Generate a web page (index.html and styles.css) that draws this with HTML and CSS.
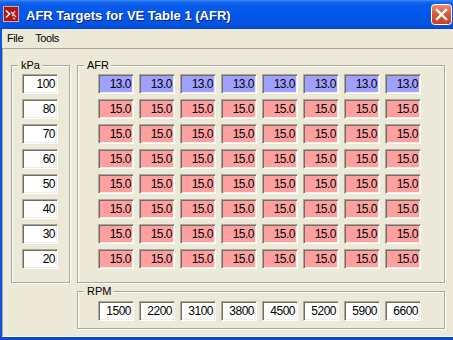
FILE: index.html
```html
<!DOCTYPE html>
<html>
<head>
<meta charset="utf-8">
<link rel="stylesheet" href="styles.css">
</head>
<body>
<div class="window">
  <div class="titlebar">
    <svg class="app-icon" width="16" height="16" viewBox="0 0 16 16">
      <rect x="0.5" y="0.5" width="15" height="15" fill="#9e0f0f" stroke="#e9a3a3"/>
      <rect x="1.5" y="1.5" width="13" height="13" fill="#b01818"/>
      <polyline points="3,4.5 6.5,8 3,11.5" fill="none" stroke="#fff" stroke-width="1.6"/>
      <path d="M8 6 L10 8 L12 5 M9 10 L11 9 L13 11 M10 12 L12 13" fill="none" stroke="#f6d8d8" stroke-width="1.2"/>
    </svg>
    <span class="title">AFR Targets for VE Table 1 (AFR)</span>
    <svg class="close" width="21" height="21" viewBox="0 0 21 21">
      <defs>
        <linearGradient id="cg" x1="0" y1="0" x2="0" y2="1">
          <stop offset="0" stop-color="#eb9273"/>
          <stop offset="0.45" stop-color="#dc5a38"/>
          <stop offset="1" stop-color="#c8401f"/>
        </linearGradient>
      </defs>
      <rect x="0.5" y="0.5" width="20" height="20" rx="3" fill="url(#cg)" stroke="#fff"/>
      <path d="M6 6 L15 15 M15 6 L6 15" stroke="#fff" stroke-width="2.4" stroke-linecap="square"/>
    </svg>
  </div>
  <div class="frame">
    <div class="menubar"><span>File</span><span>Tools</span></div>
    <div class="client">
      <div class="group kpa">
        <span class="legend">kPa</span>
        <div class="col">
          <div class="cell">100</div>
          <div class="cell">80</div>
          <div class="cell">70</div>
          <div class="cell">60</div>
          <div class="cell">50</div>
          <div class="cell">40</div>
          <div class="cell">30</div>
          <div class="cell">20</div>
        </div>
      </div>
      <div class="right">
        <div class="group afr">
          <span class="legend">AFR</span>
          <div class="grid">
            <div class="cell blue">13.0</div><div class="cell blue">13.0</div><div class="cell blue">13.0</div><div class="cell blue">13.0</div><div class="cell blue">13.0</div><div class="cell blue">13.0</div><div class="cell blue">13.0</div><div class="cell blue">13.0</div>
            <div class="cell red">15.0</div><div class="cell red">15.0</div><div class="cell red">15.0</div><div class="cell red">15.0</div><div class="cell red">15.0</div><div class="cell red">15.0</div><div class="cell red">15.0</div><div class="cell red">15.0</div>
            <div class="cell red">15.0</div><div class="cell red">15.0</div><div class="cell red">15.0</div><div class="cell red">15.0</div><div class="cell red">15.0</div><div class="cell red">15.0</div><div class="cell red">15.0</div><div class="cell red">15.0</div>
            <div class="cell red">15.0</div><div class="cell red">15.0</div><div class="cell red">15.0</div><div class="cell red">15.0</div><div class="cell red">15.0</div><div class="cell red">15.0</div><div class="cell red">15.0</div><div class="cell red">15.0</div>
            <div class="cell red">15.0</div><div class="cell red">15.0</div><div class="cell red">15.0</div><div class="cell red">15.0</div><div class="cell red">15.0</div><div class="cell red">15.0</div><div class="cell red">15.0</div><div class="cell red">15.0</div>
            <div class="cell red">15.0</div><div class="cell red">15.0</div><div class="cell red">15.0</div><div class="cell red">15.0</div><div class="cell red">15.0</div><div class="cell red">15.0</div><div class="cell red">15.0</div><div class="cell red">15.0</div>
            <div class="cell red">15.0</div><div class="cell red">15.0</div><div class="cell red">15.0</div><div class="cell red">15.0</div><div class="cell red">15.0</div><div class="cell red">15.0</div><div class="cell red">15.0</div><div class="cell red">15.0</div>
            <div class="cell red">15.0</div><div class="cell red">15.0</div><div class="cell red">15.0</div><div class="cell red">15.0</div><div class="cell red">15.0</div><div class="cell red">15.0</div><div class="cell red">15.0</div><div class="cell red">15.0</div>
          </div>
        </div>
        <div class="group rpm">
          <span class="legend">RPM</span>
          <div class="row">
            <div class="cell">1500</div>
            <div class="cell">2200</div>
            <div class="cell">3100</div>
            <div class="cell">3800</div>
            <div class="cell">4500</div>
            <div class="cell">5200</div>
            <div class="cell">5900</div>
            <div class="cell">6600</div>
          </div>
        </div>
      </div>
    </div>
  </div>
</div>
</body>
</html>
```
FILE: styles.css
```css
body {
  margin: 0;
  background: #ece9d8;
}

.window {
  width: 453px;
  height: 340px;
  overflow: hidden;
  display: flex;
  flex-direction: column;
  font-family: "Liberation Sans", Arial, sans-serif;
  color: #000;
}

.titlebar {
  height: 29px;
  flex: none;
  display: flex;
  align-items: flex-start;
  background: linear-gradient(to bottom, #3d8ffc 0px, #1467ee 2px, #0a5be9 5px, #0058ee 12px, #0455e3 22px, #0350dc 27px, #0a46c8 29px);
}

.app-icon {
  flex: none;
  margin: 6px 0 0 3px;
}

.title {
  margin: 2px 0 0 7px;
  line-height: 27px;
  font-size: 13px;
  font-weight: bold;
  color: #fff;
  text-shadow: 1px 1px 0 #0a1d8a;
  white-space: nowrap;
}

.close {
  flex: none;
  margin: 4px 1px 0 auto;
}

.frame {
  flex: 1;
  min-height: 0;
  display: flex;
  flex-direction: column;
  border-left: 2px solid #0a55e0;
  border-bottom: 3px solid #0a4bd4;
  background: #ece9d8;
}

.menubar {
  height: 19px;
  flex: none;
  display: flex;
  gap: 12px;
  padding-left: 5px;
  font-size: 11px;
  line-height: 18px;
  letter-spacing: -0.4px;
}

.client {
  flex: 1;
  min-height: 0;
  display: flex;
  align-items: flex-start;
  padding: 16px 0 0 8px;
  border-top: 1px solid #aca899;
  border-left: 1px solid #aca899;
  border-bottom: 1px solid #fff;
}

.group {
  position: relative;
  box-sizing: border-box;
  border: 1px solid #aca899;
  box-shadow: 1px 1px 0 #fff, inset 1px 1px 0 #fff;
}

.legend {
  position: absolute;
  top: -7px;
  left: 6px;
  padding: 0 2px 0 3px;
  background: #ece9d8;
  font-size: 11px;
  line-height: 13px;
  white-space: nowrap;
}

.kpa {
  width: 59px;
  height: 218px;
  padding: 8px 0 0 10px;
}

.col {
  display: flex;
  flex-direction: column;
  gap: 5px;
}

.right {
  margin-left: 7px;
  display: flex;
  flex-direction: column;
  gap: 8px;
}

.afr {
  width: 368px;
  height: 218px;
  padding: 8px 0 0 20px;
}

.grid {
  display: grid;
  grid-template-columns: repeat(8, 36px);
  gap: 5px;
}

.rpm {
  width: 368px;
  height: 38px;
  padding: 9px 0 0 20px;
}

.row {
  display: flex;
  gap: 5px;
}

.cell {
  width: 36px;
  height: 20px;
  box-sizing: border-box;
  border: 1px solid;
  border-color: #aca899 #fff #fff #aca899;
  box-shadow: inset 1px 1px 0 #716f64, inset -1px -1px 0 #f1efe2;
  background: #fff;
  text-align: right;
  padding-right: 2px;
  font-size: 12px;
  line-height: 18px;
  letter-spacing: -0.5px;
}

.blue {
  background: #a0a0ff;
}

.red {
  background: #ffa0a0;
}
```
